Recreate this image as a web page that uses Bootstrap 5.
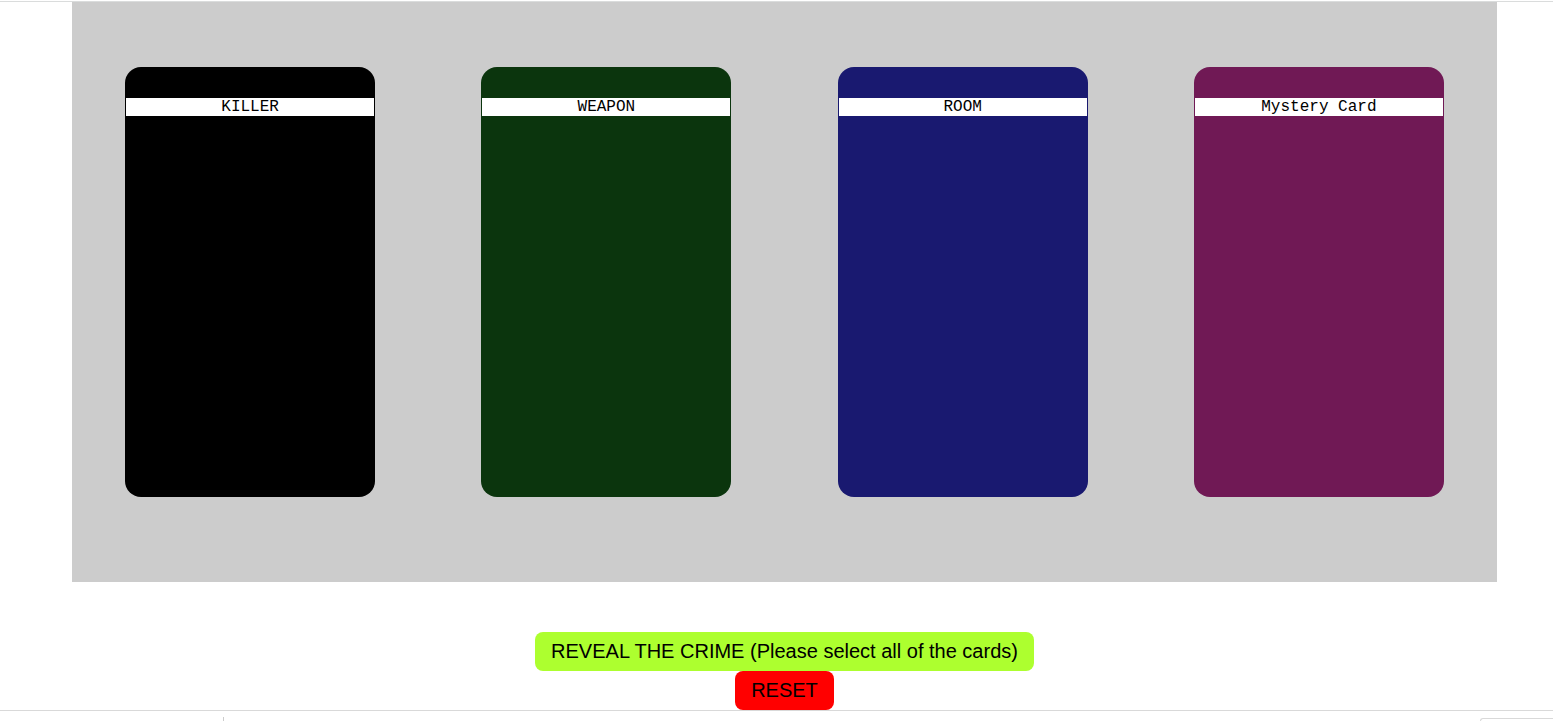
<!DOCTYPE html>
<html lang="en">
<head>
<meta charset="utf-8">
<meta name="viewport" content="width=device-width, initial-scale=1">
<title>Reveal the crime</title>
<link rel="stylesheet" href="https://cdn.jsdelivr.net/npm/bootstrap@5.3.0/dist/css/bootstrap.min.css">
<style>
  body { font-family: "Liberation Sans", Arial, sans-serif; color: #000; background: #fff; }
  .game { border-top: 1px solid #dadcdc; border-bottom: 1px solid #d9d9d9; margin-top: 1px; padding: 0 56px 0 72px; }
  .board { background: #ccc; padding: 65px 0 85px; }
  .clue { width: 250px; height: 430px; border-radius: 16px; padding: 31px 1px 0; }
  .clue-title { background: #fff; font: 16px/18px "Liberation Mono", "Courier New", monospace; }
  .clue-killer { background: #000; }
  .clue-weapon { background: #0b350d; }
  .clue-room { background: #191970; }
  .clue-mystery { background: #701955; }
  .actions { padding-top: 50px; }
  .action { --bs-btn-color: #000; --bs-btn-hover-color: #000; --bs-btn-font-size: 20px; --bs-btn-line-height: 23px; --bs-btn-padding-x: 15px; --bs-btn-padding-y: 7px; --bs-btn-border-radius: 8px; }
  .action-reveal { --bs-btn-bg: #adff2f; --bs-btn-hover-bg: #9cee1e; }
  .action-reset { --bs-btn-bg: #f00; --bs-btn-hover-bg: #e00; }
  .panel-bar { height: 10px; padding-top: 6px; overflow: hidden; }
  .panel-side { width: 224px; border-right: 1px solid #ccc; }
  .panel-box { width: 73px; margin-top: 1px; border: solid #d9d9d9; border-width: 1px 0 0 1px; border-top-left-radius: 4px; }
</style>
<script src="https://cdn.jsdelivr.net/npm/bootstrap@5.3.0/dist/js/bootstrap.bundle.min.js" defer></script>
</head>
<body class="overflow-hidden">
<main class="game">
  <section class="board d-flex justify-content-around">
    <article class="clue clue-killer"><p class="clue-title text-center m-0">KILLER</p></article>
    <article class="clue clue-weapon"><p class="clue-title text-center m-0">WEAPON</p></article>
    <article class="clue clue-room"><p class="clue-title text-center m-0">ROOM</p></article>
    <article class="clue clue-mystery"><p class="clue-title text-center m-0">Mystery Card</p></article>
  </section>
  <div class="actions d-flex flex-column align-items-center">
    <button type="button" class="btn action action-reveal">REVEAL THE CRIME (Please select all of the cards)</button>
    <button type="button" class="btn action action-reset">RESET</button>
  </div>
</main>
<footer class="panel-bar d-flex justify-content-between">
  <div class="panel-side"></div>
  <div class="panel-box"></div>
</footer>
</body>
</html>
